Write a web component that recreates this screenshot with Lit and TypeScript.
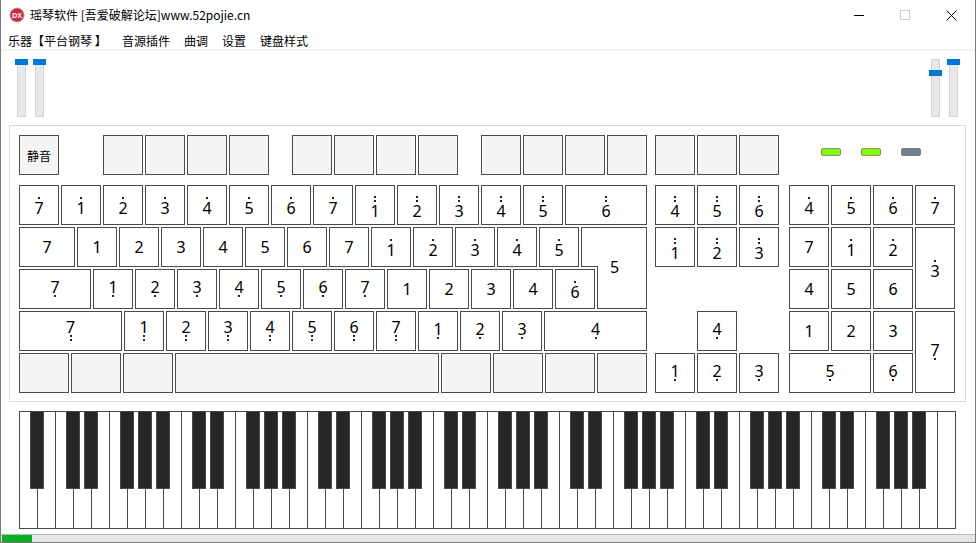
import { LitElement, html, css, nothing } from "lit";
import { customElement } from "lit/decorators.js";

type K = string; // digit + marks: "7" plain, "7'" one dot above, "7''" two above, "7," one below, "7,," two below

const row1: K[] = ["7'", "1'", "2'", "3'", "4'", "5'", "6'", "7'", "1''", "2''", "3''", "4''", "5''"];
const row2: K[] = ["1", "2", "3", "4", "5", "6", "7", "1'", "2'", "3'", "4'", "5'"];
const row3: K[] = ["1,", "2,", "3,", "4,", "5,", "6,", "7,", "1", "2", "3", "4", "6'"];
const row4: K[] = ["1,,", "2,,", "3,,", "4,,", "5,,", "6,,", "7,,", "1,", "2,", "3,"];
const nav: K[] = ["4''", "5''", "6''", "1''", "2''", "3''"];
const padTop: K[] = ["4'", "5'", "6'", "7'", "7", "1'", "2'"];

function note(k: K) {
  const up = (k.match(/'/g) || []).length;
  const dn = (k.match(/,/g) || []).length;
  const cls = up === 2 ? "note up2" : "note";
  const dots = (n: number) => Array.from({ length: n }, () => html`<i class="dot"></i>`);
  return html`<span class=${cls}>
    ${up ? html`<span class="dots above">${dots(up)}</span>` : nothing}
    <span class="digit">${k[0]}</span>
    ${dn ? html`<span class="dots below">${dots(dn)}</span>` : nothing}
  </span>`;
}

@customElement("app-root")
export class AppRoot extends LitElement {
  static styles = css`
    :host {
      display: block;
      width: 976px;
      height: 543px;
      box-sizing: border-box;
      background: #fff;
      border-left: 1px solid #7a7a7a;
      border-right: 1px solid #7a7a7a;
      border-bottom: 1px solid #7a7a7a;
      font-family: "Noto Sans CJK SC", "Noto Sans", sans-serif;
      color: #000;
      overflow: hidden;
    }
    .win { display: flex; flex-direction: column; height: 100%; }

    .titlebar { display: flex; align-items: center; height: 30px; flex: none; padding-left: 8px; }
    .logo { width: 16px; height: 16px; flex: none; margin-right: 5px; }
    .logo text { font-family: "Liberation Sans", sans-serif; font-size: 7px; font-weight: 700; fill: #fff; }
    .title { font-size: 12px; line-height: 30px; white-space: nowrap; flex: 1; }
    .winbtns { display: flex; margin-right: 1px; }
    .winbtn { width: 46px; height: 30px; display: flex; align-items: center; justify-content: center; }
    .winbtns svg { display: block; }

    .menu { display: flex; height: 19px; flex: none; padding-left: 7px; font-size: 12px; line-height: 22px; white-space: nowrap; border-bottom: 2px solid #f2f2f2; box-sizing: content-box; }
    .menu span { display: block; }
    .m0 { width: 114px; }
    .m1 { width: 62px; }
    .m2 { width: 38px; }
    .m3 { width: 38px; }

    .sliders { display: flex; justify-content: space-between; height: 74px; flex: none; padding: 8px 15px 0 14px; box-sizing: border-box; }
    .sgroup { display: flex; gap: 5px; }
    .slider { position: relative; width: 13px; height: 58px; }
    .track { width: 9px; height: 58px; margin-left: 2px; box-sizing: border-box; background: #e6e8e9; border: 1px solid #d4d4d4; }
    .thumb { position: absolute; left: 0; width: 13px; height: 6px; background: #0078d7; }

    .panel { margin-left: 8px; width: 957px; height: 277px; flex: none; box-sizing: border-box; border: 1px solid #d9d9d9; padding: 9px 0 0 9px; }

    .key { box-sizing: border-box; width: 40px; height: 40px; flex: none; border: 1px solid #4a4a4a; background: #fff; display: flex; align-items: center; justify-content: center; }
    .key.blank { background: #f5f5f5; }
    .mute { font-size: 12px; background: #f5f5f5; }

    .top { display: flex; gap: 2px; height: 40px; margin-bottom: 10px; }
    .g44 { margin-left: 42px; }
    .g23 { margin-left: 21px; }
    .g8 { margin-left: 6px; }
    .leds { display: flex; gap: 20px; margin-left: 40px; padding-top: 13px; }
    .led { width: 20px; height: 8px; box-sizing: border-box; border: 1px solid #8a8a8a; border-radius: 2px; background: #7fff00; }
    .led.off { background: #708090; border-color: #708090; }

    .board { display: flex; }
    .main { display: flex; flex-direction: column; gap: 2px; width: 628px; flex: none; }
    .row { display: flex; gap: 2px; height: 40px; }
    .w50 { width: 50px; }
    .w56 { width: 56px; }
    .w72 { width: 72px; }
    .w82 { width: 82px; }
    .w103 { width: 103px; }
    .w264 { width: 264px; }

    .enter-a { width: 66px; }
    .enter-b { width: 50px; height: 43px; margin-top: -3px; border-top: none; position: relative; }
    .enter-label { position: absolute; left: 12px; top: -5px; }

    .nav { display: grid; grid-template-columns: repeat(3, 40px); grid-auto-rows: 40px; gap: 2px; margin-left: 8px; width: 124px; flex: none; }
    .nav .c2 { grid-column: 2; }
    .nav .r4 { grid-row: 4; }
    .nav .r5 { grid-row: 5; }

    .pad { display: grid; grid-template-columns: repeat(4, 40px); grid-auto-rows: 40px; gap: 2px; margin-left: 10px; flex: none; }
    .pad .key { width: auto; height: auto; }
    .tall { grid-row: span 2; }
    .wide { grid-column: span 2; }

    .note { display: flex; flex-direction: column; align-items: center; }
    .note.up2 { padding-top: 2px; }
    .digit { display: block; font-family: "Noto Sans", sans-serif; font-size: 16px; line-height: 12px; height: 12px; }
    .dots { display: flex; flex-direction: column; align-items: center; gap: 2px; }
    .dots.above { margin-bottom: 3px; }
    .dots.below { margin-top: 2px; }
    .dot { display: block; width: 2px; height: 2px; background: #222; }

    .piano { position: relative; margin: 9px 0 0 18px; height: 118px; width: 937px; flex: none; box-sizing: border-box; border: 1px solid #4a4a4a; display: flex; }
    .white { width: 18px; flex: none; box-sizing: border-box; border-right: 1px solid #4a4a4a; }
    .white:last-of-type { border-right: none; }
    .black { position: absolute; top: -1px; width: 14px; height: 78px; box-sizing: border-box; background: #252525; border: 1px solid #4a4a4a; }

    .status { margin-top: 5px; height: 8px; flex: none; box-sizing: border-box; border-top: 1px solid #b8b8b8; background: #e6e6e6; padding-left: 1px; }
    .bar { width: 30px; height: 7px; background: #06b025; }
  `;

  private keys(list: K[]) {
    return list.map((k) => html`<div class="key">${note(k)}</div>`);
  }

  private blackPositions(): number[] {
    // Lines between white keys that carry a black key: A#, then repeating octave C#D# F#G#A#
    const out: number[] = [1];
    const pattern = [3, 4, 6, 7, 8];
    for (let o = 0; o < 7; o++) for (const p of pattern) out.push(p + o * 7);
    return out;
  }

  render() {
    const blanks = (n: number) => Array.from({ length: n }, () => html`<div class="key blank"></div>`);
    return html`<div class="win">
      <div class="titlebar">
        <svg class="logo" viewBox="0 0 16 16">
          <circle cx="8" cy="8" r="7.5" fill="#a8a8a8"></circle>
          <circle cx="8" cy="8" r="6.5" fill="#d8243c"></circle>
          <text x="8" y="10.5" text-anchor="middle">DX</text>
        </svg>
        <div class="title">瑶琴软件 [吾爱破解论坛]www.52pojie.cn</div>
        <div class="winbtns">
          <div class="winbtn"><svg width="10" height="10" viewBox="0 0 10 10"><path d="M0 5.5h10" stroke="#000" stroke-width="1"></path></svg></div>
          <div class="winbtn"><svg width="10" height="10" viewBox="0 0 10 10"><rect x=".5" y=".5" width="9" height="9" fill="none" stroke="#ccc"></rect></svg></div>
          <div class="winbtn"><svg width="11" height="11" viewBox="0 0 11 11"><path d="M.5 .5l10 10M10.5 .5l-10 10" stroke="#000" stroke-width="1"></path></svg></div>
        </div>
      </div>
      <div class="menu">
        <span class="m0">乐器【平台钢琴 】</span><span class="m1">音源插件</span><span class="m2">曲调</span><span class="m3">设置</span><span>键盘样式</span>
      </div>
      <div class="sliders">
        <div class="sgroup">
          <div class="slider"><div class="track"></div><div class="thumb" style="top:0px"></div></div>
          <div class="slider"><div class="track"></div><div class="thumb" style="top:0px"></div></div>
        </div>
        <div class="sgroup">
          <div class="slider"><div class="track"></div><div class="thumb" style="top:11px"></div></div>
          <div class="slider"><div class="track"></div><div class="thumb" style="top:0px"></div></div>
        </div>
      </div>
      <div class="panel">
        <div class="top">
          <div class="key mute">静音</div>
          <div class="key blank g44"></div>${blanks(3)}
          <div class="key blank g23"></div>${blanks(3)}
          <div class="key blank g23"></div>${blanks(3)}
          <div class="key blank g8"></div>${blanks(2)}
          <div class="leds"><div class="led"></div><div class="led"></div><div class="led off"></div></div>
        </div>
        <div class="board">
          <div class="main">
            <div class="row">${this.keys(row1)}<div class="key w82">${note("6''")}</div></div>
            <div class="row"><div class="key w56">${note("7")}</div>${this.keys(row2)}<div class="key enter-a"></div></div>
            <div class="row"><div class="key w72">${note("7,")}</div>${this.keys(row3)}<div class="key enter-b"><span class="enter-label">${note("5")}</span></div></div>
            <div class="row"><div class="key w103">${note("7,,")}</div>${this.keys(row4)}<div class="key w103">${note("4,")}</div></div>
            <div class="row">
              <div class="key blank w50"></div><div class="key blank w50"></div><div class="key blank w50"></div>
              <div class="key blank w264"></div>
              <div class="key blank w50"></div><div class="key blank w50"></div><div class="key blank w50"></div><div class="key blank w50"></div>
            </div>
          </div>
          <div class="nav">
            ${this.keys(nav)}
            <div class="key c2 r4">${note("4,")}</div>
            <div class="key r5">${note("1,")}</div><div class="key r5">${note("2,")}</div><div class="key r5">${note("3,")}</div>
          </div>
          <div class="pad">
            ${this.keys(padTop)}
            <div class="key tall">${note("3'")}</div>
            <div class="key">${note("4")}</div><div class="key">${note("5")}</div><div class="key">${note("6")}</div>
            <div class="key">${note("1")}</div><div class="key">${note("2")}</div><div class="key">${note("3")}</div>
            <div class="key tall">${note("7,")}</div>
            <div class="key wide">${note("5,")}</div><div class="key">${note("6,")}</div>
          </div>
        </div>
      </div>
      <div class="piano">
        ${Array.from({ length: 52 }, () => html`<div class="white"></div>`)}
        ${this.blackPositions().map((n) => html`<div class="black" style="left:${n * 18 - 8}px"></div>`)}
      </div>
      <div class="status"><div class="bar"></div></div>
    </div>`;
  }
}
